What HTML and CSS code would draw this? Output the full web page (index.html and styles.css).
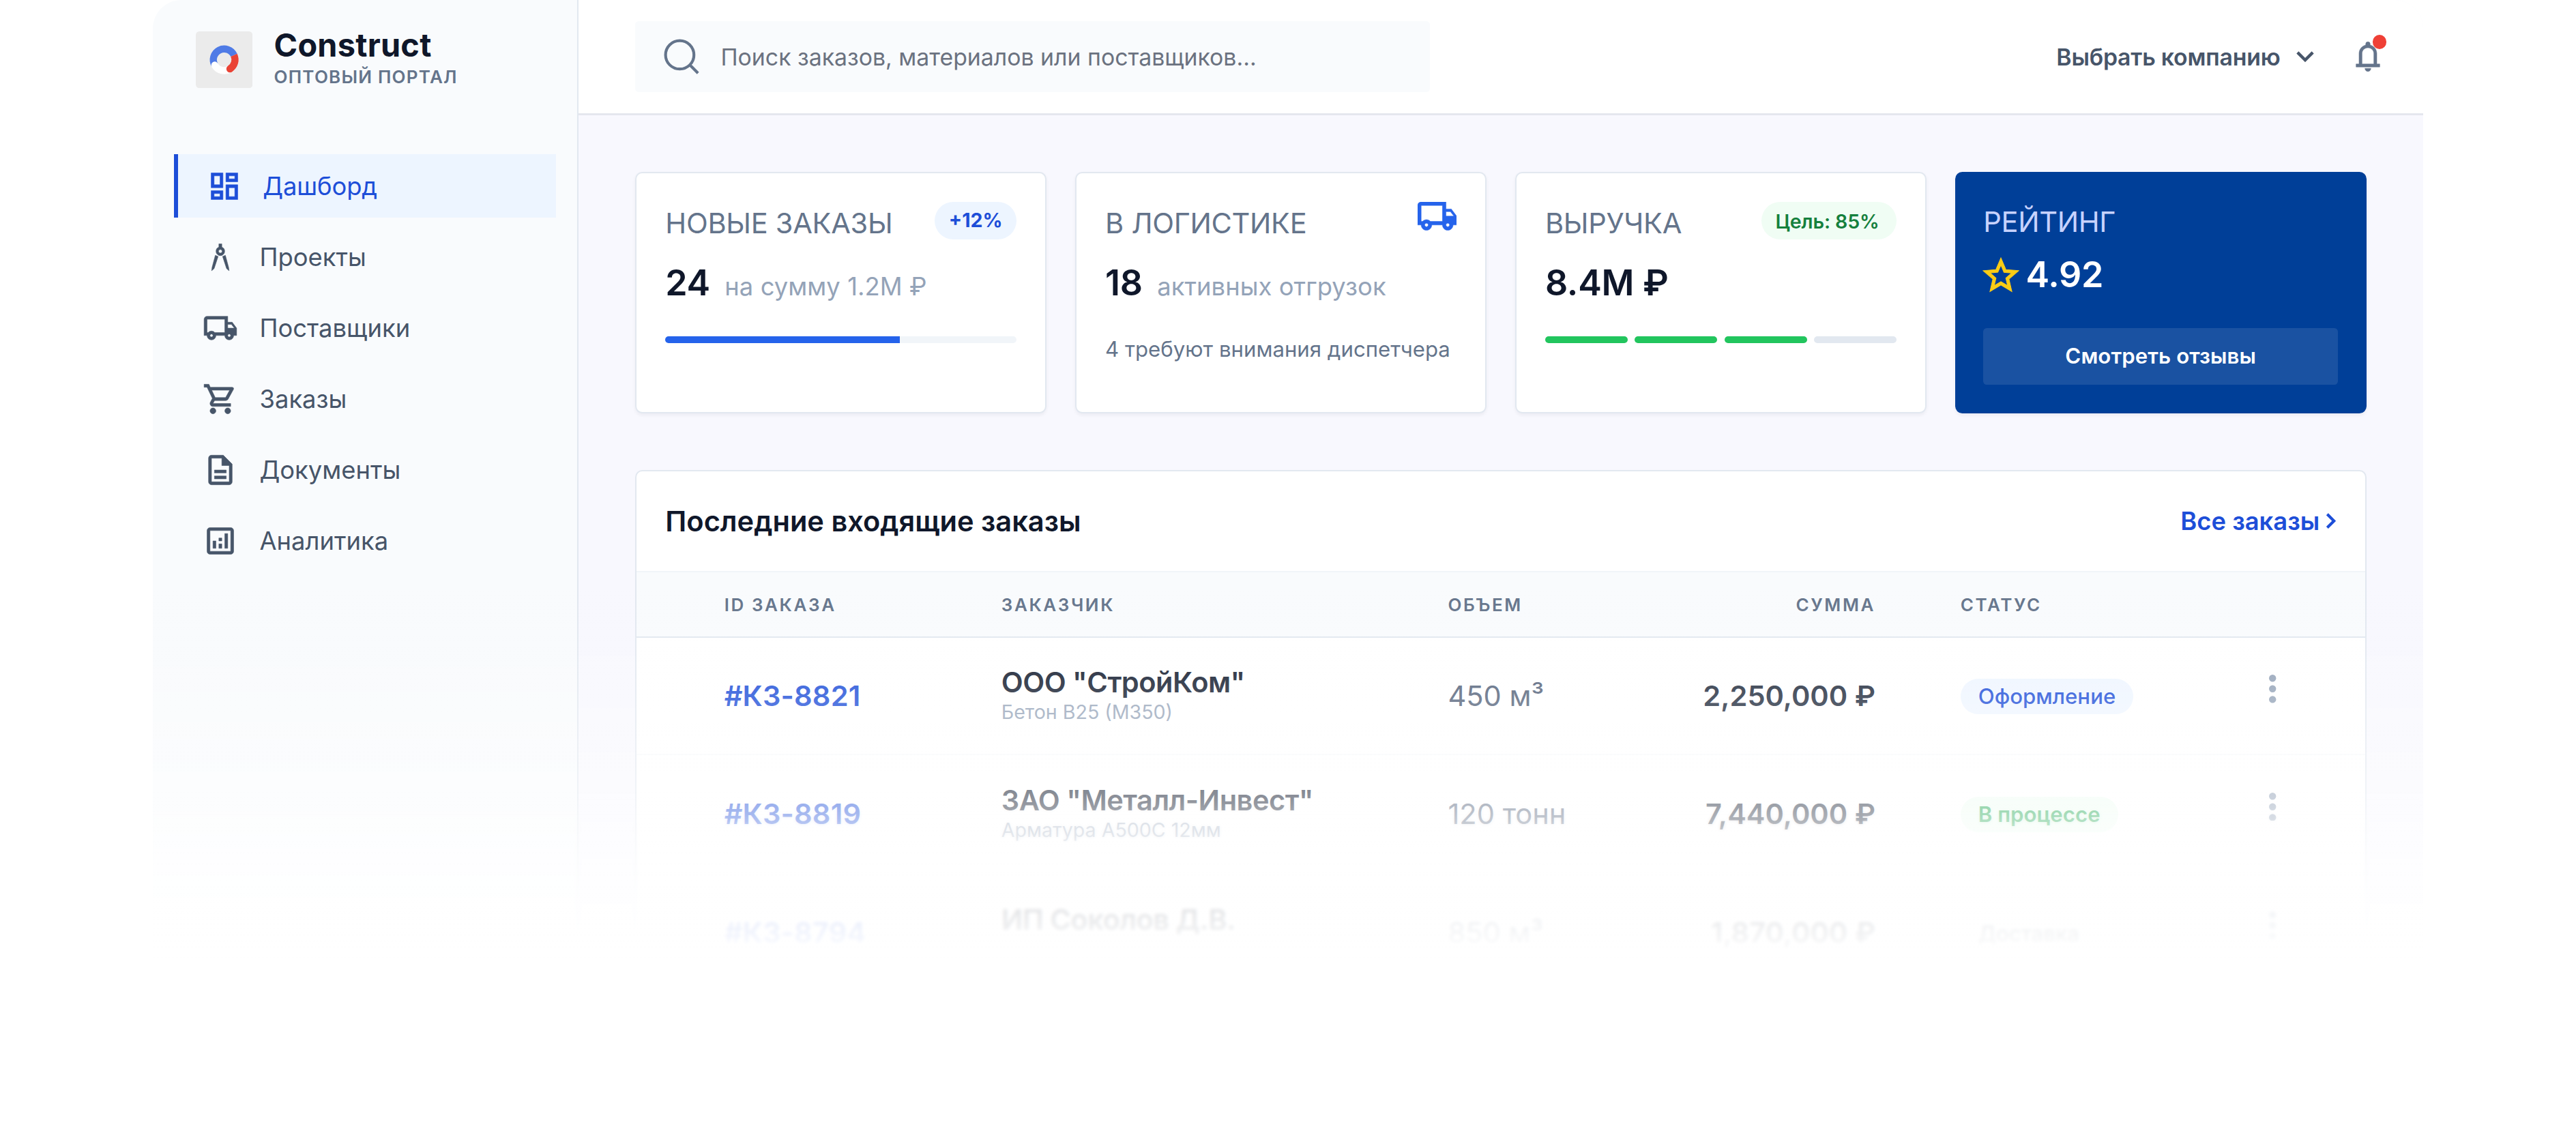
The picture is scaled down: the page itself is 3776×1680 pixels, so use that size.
FILE: index.html
```
<!DOCTYPE html>
<html lang="ru">
  <head>
    <meta charset="UTF-8" />
    <meta name="viewport" content="width=device-width, initial-scale=1.0" />
    <title>Construct — Оптовый портал</title>
    <link rel="stylesheet" href="styles.css">
  </head>
  <body>
    <div class="app">
      <aside class="sidebar">
        <div class="brand">
          <svg class="brand-logo" viewBox="0 0 32 32">
            <rect width="32" height="32" rx="2" fill="#ebebeb" />
            <g fill="none" stroke-width="4">
              <path d="M10.72 19.05A6.1 6.1 0 1 1 21.53 13.42" stroke="#4f7be6" />
              <path d="M10.72 19.05A6.1 6.1 0 0 0 19.23 21.17" stroke="#fff" stroke-linecap="round" />
              <path d="M19.23 21.17A6.1 6.1 0 0 0 21.53 13.42" stroke="#ea4335" />
              <circle cx="19.23" cy="21.17" r="2" fill="#ea4335" stroke="none" />
            </g>
          </svg>
          <div>
            <div class="brand-name">Construct</div>
            <div class="brand-sub">ОПТОВЫЙ ПОРТАЛ</div>
          </div>
        </div>
        <nav class="nav">
          <a class="nav-item active">
            <svg class="icon" viewBox="0 0 24 24"><path d="M19 5v2h-4V5h4M9 5v6H5V5h4m10 8v6h-4v-6h4M9 17v2H5v-2h4M21 3h-8v6h8V3zM11 3H3v10h8V3zm10 8h-8v10h8V11zm-10 4H3v6h8v-6z" /></svg>
            Дашборд
          </a>
          <a class="nav-item">
            <svg class="icon" viewBox="0 0 24 24"><path fill-rule="evenodd" d="M11 3h2v2.2a3 3 0 0 1 0 5.6 3 3 0 0 1-2 0 3 3 0 0 1 0-5.6zM12 6.8a1.2 1.2 0 1 0 0 2.4 1.2 1.2 0 0 0 0-2.4zM8.6 10.7l1.9.8-2.7 8.2L6.1 21.2l.3-2.3zM15.4 10.7l-1.9.8 2.7 8.2 1.7 1.5-.3-2.3z" /></svg>
            Проекты
          </a>
          <a class="nav-item">
            <svg class="icon" viewBox="0 0 24 24"><path d="M20 8h-3V4H3c-1.1 0-2 .9-2 2v11h2c0 1.66 1.34 3 3 3s3-1.34 3-3h6c0 1.66 1.34 3 3 3s3-1.34 3-3h2v-5l-3-4zm-.5 1.5l1.96 2.5H17V9.5h2.5zM6 18c-.55 0-1-.45-1-1s.45-1 1-1 1 .45 1 1-.45 1-1 1zm2.22-3c-.55-.61-1.33-1-2.22-1s-1.67.39-2.22 1H3V6h12v9H8.22zM18 18c-.55 0-1-.45-1-1s.45-1 1-1 1 .45 1 1-.45 1-1 1z" /></svg>
            Поставщики
          </a>
          <a class="nav-item">
            <svg class="icon" viewBox="0 0 24 24"><path d="M15.55 13c.75 0 1.41-.41 1.75-1.03l3.58-6.49A.996.996 0 0 0 20.01 4H5.21l-.94-2H1v2h2l3.6 7.59-1.35 2.44C4.52 15.37 5.48 17 7 17h12v-2H7l1.1-2h7.45zM6.16 6h12.15l-2.76 5H8.53L6.16 6zM7 18c-1.1 0-1.99.9-1.99 2S5.9 22 7 22s2-.9 2-2-.9-2-2-2zm10 0c-1.1 0-1.99.9-1.99 2s.89 2 1.99 2 2-.9 2-2-.9-2-2-2z" /></svg>
            Заказы
          </a>
          <a class="nav-item">
            <svg class="icon" viewBox="0 0 24 24"><path d="M8 16h8v2H8zm0-4h8v2H8zm6-10H6c-1.1 0-2 .9-2 2v16c0 1.1.89 2 1.99 2H18c1.1 0 2-.9 2-2V8l-6-6zm4 18H6V4h7v5h5v11z" /></svg>
            Документы
          </a>
          <a class="nav-item">
            <svg class="icon" viewBox="0 0 24 24"><path d="M19 3H5c-1.1 0-2 .9-2 2v14c0 1.1.9 2 2 2h14c1.1 0 2-.9 2-2V5c0-1.1-.9-2-2-2zm0 16H5V5h14v14zM7 12h2v5H7zm8-5h2v10h-2zm-4 7h2v3h-2zm0-4h2v2h-2z" /></svg>
            Аналитика
          </a>
        </nav>
      </aside>

      <main class="main">
        <header class="topbar">
          <div class="search">
            <svg class="search-icon" viewBox="0 0 20 20"><circle cx="9" cy="9" r="8" /><path d="M14.8 14.8L19.3 19.3" /></svg>
            <span>Поиск заказов, материалов или поставщиков...</span>
          </div>
          <div class="topbar-right">
            <div class="company">
              Выбрать компанию
              <svg class="chevron" viewBox="0 0 10 6"><path d="M.7.7L5 5 9.3.7" /></svg>
            </div>
            <div class="bell">
              <svg class="icon" viewBox="0 0 24 24"><path d="M4 19v-2h2v-7c0-2.9 1.9-5.2 4.5-5.8v-.7a1.5 1.5 0 0 1 3 0v.7C16.1 4.8 18 7.1 18 10v7h2v2zm4-2h8v-7c0-2.3-1.7-4-4-4s-4 1.7-4 4zM10 20h4a2 2 0 0 1-4 0z" /></svg>
              <span class="bell-dot"></span>
            </div>
          </div>
        </header>

        <section class="cards">
          <div class="card">
            <div class="card-head">
              <span class="card-title">НОВЫЕ ЗАКАЗЫ</span>
              <span class="pill pill-blue">+12%</span>
            </div>
            <div class="card-value">24 <small>на сумму 1.2М ₽</small></div>
            <div class="progress"><div class="progress-fill"></div></div>
          </div>
          <div class="card">
            <div class="card-head">
              <span class="card-title">В ЛОГИСТИКЕ</span>
              <svg class="truck" viewBox="1 4 22 16"><path d="M20 8h-3V4H3c-1.1 0-2 .9-2 2v11h2c0 1.66 1.34 3 3 3s3-1.34 3-3h6c0 1.66 1.34 3 3 3s3-1.34 3-3h2v-5l-3-4zm-.5 1.5l1.96 2.5H17V9.5h2.5zM6 18c-.55 0-1-.45-1-1s.45-1 1-1 1 .45 1 1-.45 1-1 1zm2.22-3c-.55-.61-1.33-1-2.22-1s-1.67.39-2.22 1H3V6h12v9H8.22zM18 18c-.55 0-1-.45-1-1s.45-1 1-1 1 .45 1 1-.45 1-1 1z" /></svg>
            </div>
            <div class="card-value">18 <small>активных отгрузок</small></div>
            <div class="card-note">4 требуют внимания диспетчера</div>
          </div>
          <div class="card">
            <div class="card-head">
              <span class="card-title">ВЫРУЧКА</span>
              <span class="pill pill-green">Цель: 85%</span>
            </div>
            <div class="card-value">8.4М ₽</div>
            <div class="segments"><i></i><i></i><i></i><i class="off"></i></div>
          </div>
          <div class="card card-rating">
            <div class="card-title">РЕЙТИНГ</div>
            <div class="rating">
              <svg class="star" viewBox="2 2 20 19"><path d="M22 9.24l-7.19-.62L12 2 9.19 8.63 2 9.24l5.46 4.73L5.82 21 12 17.27 18.18 21l-1.63-7.03L22 9.24zM12 15.4l-3.76 2.27 1-4.28-3.32-2.88 4.38-.38L12 6.1l1.71 4.04 4.38.38-3.32 2.88 1 4.28L12 15.4z" /></svg>
              4.92
            </div>
            <div class="rating-button">Смотреть отзывы</div>
          </div>
        </section>

        <section class="panel">
          <div class="panel-head">
            <h2>Последние входящие заказы</h2>
            <a class="all-link">
              Все заказы
              <svg class="arrow" viewBox="0 0 6 9"><path d="M.9.7L4.7 4.5.9 8.3" /></svg>
            </a>
          </div>
          <table>
            <thead>
              <tr>
                <th class="col-id">ID ЗАКАЗА</th>
                <th class="col-client">ЗАКАЗЧИК</th>
                <th class="col-volume">ОБЪЕМ</th>
                <th class="col-sum">СУММА</th>
                <th class="col-status">СТАТУС</th>
                <th></th>
              </tr>
            </thead>
            <tbody>
              <tr>
                <td class="col-id">#КЗ-8821</td>
                <td><div class="client">ООО "СтройКом"</div><div class="goods">Бетон В25 (М350)</div></td>
                <td class="col-volume">450 м³</td>
                <td class="col-sum">2,250,000 ₽</td>
                <td><span class="status status-new">Оформление</span></td>
                <td class="col-menu"><svg class="dots" viewBox="0 0 4 16"><circle cx="2" cy="2" r="2" /><circle cx="2" cy="8" r="2" /><circle cx="2" cy="14" r="2" /></svg></td>
              </tr>
              <tr>
                <td class="col-id">#КЗ-8819</td>
                <td><div class="client">ЗАО "Металл-Инвест"</div><div class="goods">Арматура А500С 12мм</div></td>
                <td class="col-volume">120 тонн</td>
                <td class="col-sum">7,440,000 ₽</td>
                <td><span class="status status-work">В процессе</span></td>
                <td class="col-menu"><svg class="dots" viewBox="0 0 4 16"><circle cx="2" cy="2" r="2" /><circle cx="2" cy="8" r="2" /><circle cx="2" cy="14" r="2" /></svg></td>
              </tr>
              <tr>
                <td class="col-id">#КЗ-8794</td>
                <td><div class="client">ИП Соколов Д.В.</div><div class="goods">&nbsp;</div></td>
                <td class="col-volume">850 м³</td>
                <td class="col-sum">1,870,000 ₽</td>
                <td><span class="status status-ship">Доставка</span></td>
                <td class="col-menu"><svg class="dots" viewBox="0 0 4 16"><circle cx="2" cy="2" r="2" /><circle cx="2" cy="8" r="2" /><circle cx="2" cy="14" r="2" /></svg></td>
              </tr>
            </tbody>
          </table>
        </section>
      </main>
      <div class="fade-blur"></div>
      <div class="fade"></div>
    </div>
  </body>
</html>
```
FILE: styles.css
```
* {
  box-sizing: border-box;
}

body {
  margin: 0;
  background: #fff;
  font-family: Inter, "Liberation Sans", sans-serif;
  overflow: hidden;
}

.app {
  zoom: 2.6;
  position: relative;
  display: flex;
  width: 1280px;
  height: 646px;
  margin: 0 auto;
  overflow: hidden;
  border-radius: 16px 16px 0 0;
}

.icon {
  width: 20px;
  height: 20px;
  fill: currentColor;
  stroke: currentColor;
  stroke-width: 0.25;
  flex: none;
}

/* Sidebar */
.sidebar {
  width: 240px;
  flex: none;
  padding: 15.5px 12px 0;
  background: #f9fbfd;
  border-right: 1px solid #e2e8f0;
}

.brand {
  display: flex;
  align-items: center;
  gap: 12px;
  height: 36px;
  padding-left: 12.3px;
  margin-bottom: 35.3px;
}

.brand-logo {
  width: 32px;
  height: 32px;
}

.brand-name {
  font-size: 18px;
  line-height: 20px;
  font-weight: 700;
  letter-spacing: 0.1px;
  color: #0f172a;
}

.brand-sub {
  font-size: 10px;
  line-height: 16px;
  font-weight: 600;
  letter-spacing: 0.47px;
  color: #64748b;
}

.nav {
  display: flex;
  flex-direction: column;
  gap: 4px;
}

.nav-item {
  display: flex;
  align-items: center;
  gap: 12.2px;
  height: 36px;
  padding: 0.5px 0 0 16px;
  font-size: 14px;
  color: #475569;
}

.nav-item.active {
  gap: 11.7px;
  letter-spacing: -0.04px;
  color: #1d4ed8;
  background: #edf5ff;
  border-left: 2.4px solid #1d4ed8;
}

/* Top bar */
.main {
  flex: 1;
  background: #f8f8fe;
}

.topbar {
  display: flex;
  align-items: center;
  justify-content: space-between;
  height: 65px;
  padding: 0 21px 0 32px;
  background: #fff;
  border-bottom: 1.2px solid #e5e7ee;
}

.search {
  display: flex;
  align-items: center;
  gap: 12px;
  width: 448px;
  height: 40px;
  padding-left: 16.2px;
  border-radius: 2px;
  background: #f9fbfd;
  font-size: 13px;
  color: #6b7280;
}

.search-icon {
  width: 20px;
  height: 20px;
  fill: none;
  stroke: #64748b;
  stroke-width: 1.6;
}

.topbar-right {
  display: flex;
  align-items: center;
  gap: 20.6px;
}

.company {
  display: flex;
  align-items: center;
  gap: 9px;
  font-size: 13px;
  font-weight: 600;
  letter-spacing: -0.08px;
  color: #475569;
}

.chevron {
  width: 10px;
  height: 6px;
  fill: none;
  stroke: currentColor;
  stroke-width: 1.7;
}

.bell {
  position: relative;
  width: 20px;
  height: 20px;
  color: #64748b;
}

.bell-dot {
  position: absolute;
  top: -2.4px;
  right: -0.4px;
  width: 8px;
  height: 8px;
  border-radius: 50%;
  background: #ef4036;
}

/* Stat cards */
.cards {
  display: grid;
  grid-template-columns: repeat(4, 1fr);
  gap: 16px;
  padding: 32px 32px 0;
}

.card {
  height: 136px;
  padding: 16.2px;
  background: #fff;
  border: 1px solid #e2e8f0;
  border-radius: 4px;
  box-shadow: 0 1px 2px rgba(15, 23, 42, 0.05);
}

.card-head {
  display: flex;
  align-items: flex-start;
  justify-content: space-between;
}

.card-title {
  font-size: 16px;
  line-height: 24px;
  letter-spacing: -0.12px;
  color: #64748b;
}

.pill {
  height: 21px;
  line-height: 20.5px;
  border-radius: 11px;
  font-size: 11px;
}

.pill-blue {
  padding: 0 8px;
  font-weight: 700;
  color: #1d4ed8;
  background: #edf5ff;
}

.pill-green {
  padding: 0 9.7px 0 8px;
  line-height: 22px;
  font-weight: 600;
  letter-spacing: -0.04px;
  color: #15803d;
  background: #f0fdf4;
}

.truck {
  width: 22px;
  height: 16px;
  fill: #2563eb;
  stroke: #2563eb;
  stroke-width: 0.2;
}

.card-value {
  display: flex;
  align-items: baseline;
  gap: 8.2px;
  height: 27px;
  margin-top: 8.2px;
  font-size: 20px;
  line-height: 27px;
  font-weight: 600;
  letter-spacing: -0.1px;
  color: #0f172a;
  white-space: nowrap;
}

.card-value small {
  font-size: 14px;
  font-weight: 400;
  letter-spacing: 0.02px;
  color: #94a3b8;
}

.card-note {
  margin-top: 16.2px;
  font-size: 12px;
  line-height: 16px;
  white-space: nowrap;
  color: #64748b;
}

.progress {
  margin-top: 16.3px;
  height: 4px;
  border-radius: 2px;
  background: #f1f5f9;
  overflow: hidden;
}

.progress-fill {
  width: 66.7%;
  height: 100%;
  background: #2563eb;
}

.segments {
  display: flex;
  gap: 4px;
  margin-top: 16.3px;
}

.segments i {
  flex: 1;
  height: 4px;
  border-radius: 2px;
  background: #22c55e;
}

.segments .off {
  background: #e2e8f0;
}

.card-rating {
  padding: 16px;
  background: #003f98;
  border: none;
}

.card-rating .card-title {
  color: #c7d2fe;
}

.rating {
  display: flex;
  align-items: center;
  gap: 4px;
  margin-top: 4px;
  font-size: 20px;
  line-height: 28px;
  font-weight: 600;
  letter-spacing: -0.1px;
  color: #fff;
}

.star {
  width: 20px;
  height: 19px;
  overflow: visible;
  fill: #facc15;
  stroke: #facc15;
  stroke-width: 0.4;
}

.rating-button {
  margin-top: 16px;
  border-radius: 2px;
  background: rgba(255, 255, 255, 0.1);
  font-size: 12px;
  line-height: 32px;
  font-weight: 600;
  letter-spacing: 0.03px;
  text-align: center;
  color: #fff;
}

/* Orders */
.panel {
  margin: 32px 32px 0;
  height: 420px;
  background: #fff;
  border: 1px solid #e2e8f0;
  border-radius: 4px;
}

.panel-head {
  display: flex;
  align-items: center;
  justify-content: space-between;
  height: 57px;
  padding: 0 16.2px;
  border-bottom: 1px solid #f1f5f9;
}

.panel-head h2 {
  margin: 0;
  font-size: 16px;
  font-weight: 600;
  color: #0f172a;
}

.all-link {
  display: flex;
  align-items: center;
  gap: 3.4px;
  font-size: 14px;
  font-weight: 600;
  color: #1d4ed8;
}

.arrow {
  width: 6px;
  height: 9px;
  fill: none;
  stroke: currentColor;
  stroke-width: 1.6;
}

table {
  width: 100%;
  table-layout: fixed;
  border-spacing: 0;
}

th,
td {
  padding: 0 24px;
  text-align: left;
}

th {
  height: 37px;
  background: #f9fbfd;
  border-bottom: 1px solid #e2e8f0;
  font-size: 10px;
  font-weight: 600;
  letter-spacing: 1px;
  color: #64748b;
}

td {
  height: 67px;
  border-bottom: 1px solid #f8fafc;
  font-size: 16px;
  white-space: nowrap;
}

tbody tr:first-child td {
  height: 66px;
}

th.col-id {
  width: 181.6px;
}

.col-id {
  padding-left: 49.4px;
  padding-right: 0;
}

th.col-client {
  width: 251.8px;
}

th.col-volume {
  width: 120px;
}

th.col-sum {
  width: 169px;
}

.col-sum {
  text-align: right;
}

th.col-status {
  width: 159.8px;
}

td.col-id {
  font-weight: 600;
  letter-spacing: 0.06px;
  color: #1d4ed8;
}

td.col-volume {
  color: #53627a;
}

td.col-sum {
  font-weight: 600;
  color: #1e293b;
}

.client {
  line-height: 19.6px;
  font-weight: 600;
  letter-spacing: -0.2px;
  color: #131c2f;
}

.goods {
  padding-bottom: 0.8px;
  font-size: 11px;
  line-height: 14px;
  color: #94a3b8;
}

.status {
  display: inline-block;
  padding: 0 10px;
  border-radius: 10px;
  font-size: 12px;
  line-height: 20px;
  font-weight: 500;
  vertical-align: middle;
}

.status-new {
  color: #1d4ed8;
  background: #eff6ff;
}

.status-work {
  font-weight: 600;
  color: #16a34a;
  background: #f0fdf4;
}

.status-ship {
  color: #475569;
  background: #f8fafc;
}

.col-menu {
  padding: 0 0 8px 38.3px;
}

.dots {
  display: block;
  width: 4px;
  height: 16px;
  fill: #94a3b8;
}

/* Bottom of the screen dissolves into the page */
.fade,
.fade-blur {
  position: absolute;
  left: 0;
  right: 0;
  bottom: 0;
}

.fade {
  top: 330px;
  background: linear-gradient(
    rgba(255, 255, 255, 0) 0,
    rgba(255, 255, 255, 0.16) 52px,
    rgba(255, 255, 255, 0.28) 75px,
    rgba(255, 255, 255, 0.48) 115px,
    rgba(255, 255, 255, 0.64) 135px,
    rgba(255, 255, 255, 0.84) 170px,
    rgba(255, 255, 255, 0.94) 197px,
    #fff 210px
  );
}

.fade-blur {
  top: 450px;
  backdrop-filter: blur(1px);
  mask-image: linear-gradient(transparent, #000 50px);
}
```
